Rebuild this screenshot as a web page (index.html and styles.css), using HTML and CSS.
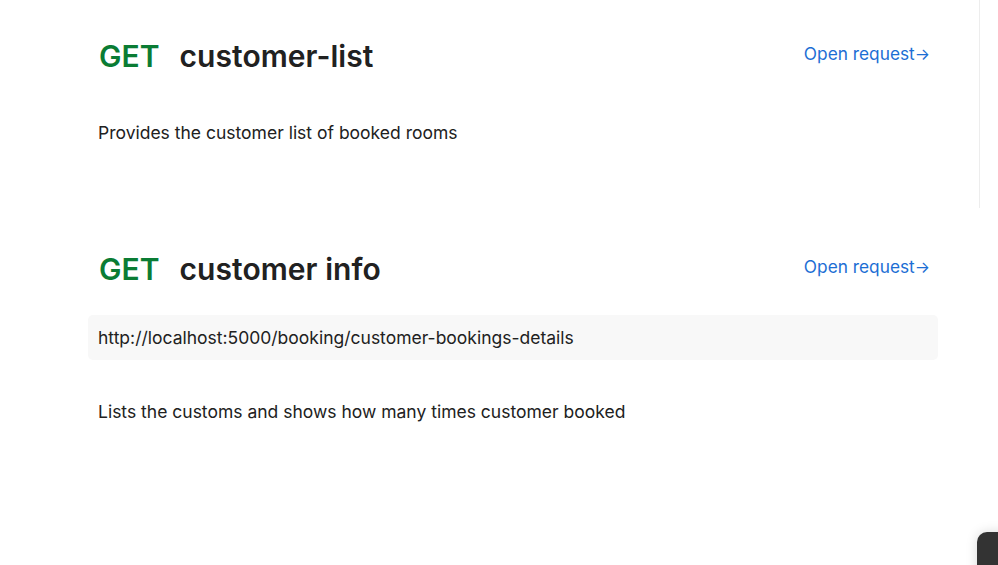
FILE: index.html
```html
<!DOCTYPE html>
<html>
<head>
<meta charset="utf-8">
<link rel="stylesheet" href="styles.css">
</head>
<body>
<div class="page">
  <main class="content">
    <section class="req">
      <div class="req-head">
        <h2 class="req-title"><span class="method">GET</span><span class="name">customer-list</span></h2>
        <a class="open" href="#">Open request<span class="arrow">→</span></a>
      </div>
      <p class="desc first">Provides the customer list of booked rooms</p>
    </section>
    <section class="req second">
      <div class="req-head">
        <h2 class="req-title"><span class="method">GET</span><span class="name">customer info</span></h2>
        <a class="open" href="#">Open request<span class="arrow">→</span></a>
      </div>
      <div class="url">http://localhost:5000/booking/customer-bookings-details</div>
      <p class="desc">Lists the customs and shows how many times customer booked</p>
    </section>
  </main>
  <div class="divider"></div>
</div>
<div class="fab"></div>
</body>
</html>
```
FILE: styles.css
```css
html, body {
  margin: 0;
  padding: 0;
  background: #ffffff;
  font-family: Inter, "Noto Sans", sans-serif;
  color: #212121;
  overflow: hidden;
}
.page {
  display: flex;
  height: 565px;
}
.content {
  width: 850px;
  margin-left: 88px;
  padding-top: 32px;
}
.divider {
  width: 1px;
  height: 208px;
  background: #ededed;
  margin-left: 41px;
}
.req-head {
  display: flex;
  justify-content: space-between;
  align-items: flex-start;
}
.req-title {
  margin: 0;
  padding-left: 11px;
  font-size: 30px;
  font-weight: 600;
  line-height: 48px;
  letter-spacing: 0.05px;
}
.method {
  color: #0a7c34;
  margin-right: 20px;
}
.name {
  color: #212121;
}
.open {
  color: #1c6ed4;
  text-decoration: none;
  font-size: 17.3px;
  line-height: 44px;
  margin-right: 8px;
}
.arrow {
  font-size: 16px;
}
.desc {
  margin: 0;
  padding-left: 10px;
  font-size: 17.5px;
  line-height: 26px;
}
.desc.first {
  margin-top: 40px;
}
.second {
  margin-top: 99px;
}
.url {
  margin-top: 22px;
  background: #f8f8f8;
  border-radius: 5px;
  padding: 10px 10px 9px;
  font-size: 17.5px;
  line-height: 26px;
}
.second .desc {
  margin-top: 39px;
}
.fab {
  position: fixed;
  left: 977px;
  top: 532px;
  width: 60px;
  height: 60px;
  background: #333333;
  border-radius: 10px;
  box-shadow: 0 0 12px rgba(0,0,0,0.15);
}
```
